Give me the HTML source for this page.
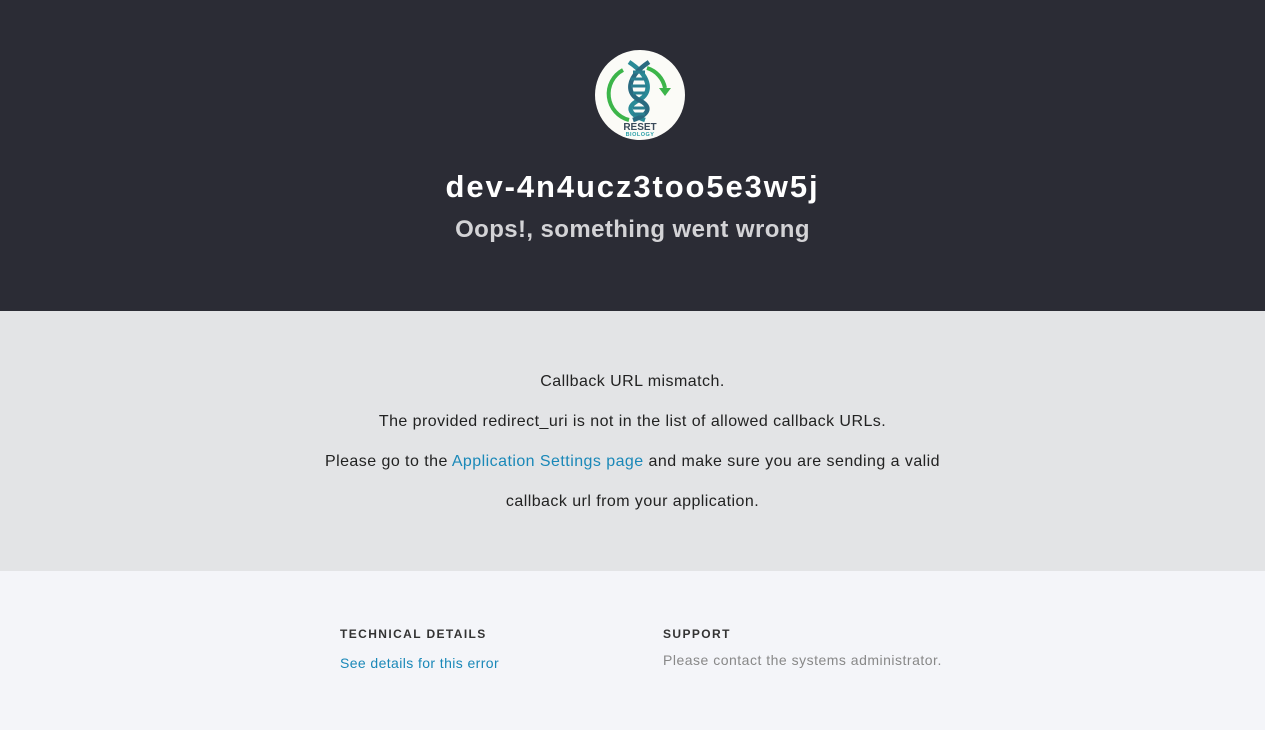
<!DOCTYPE html>
<html><head><meta charset="utf-8"><style>
*{margin:0;padding:0;box-sizing:border-box}
body{width:1265px;height:730px;font-family:"Liberation Sans",sans-serif;overflow:hidden;background:#f4f5f9}
.top{height:311px;background:#2b2c35;position:relative;text-align:center}
.logo{position:absolute;left:595px;top:50px;width:90px;height:90px;border-radius:50%;background:#fbfbf7}
h1{position:absolute;top:169px;width:100%;color:#fff;font-size:31px;font-weight:bold;letter-spacing:1.9px}
h2{position:absolute;top:216px;width:100%;color:#d3d3d6;font-size:24px;font-weight:bold;letter-spacing:0.4px}
.mid{height:260px;background:#e3e4e6;text-align:center;color:#222;font-size:16px;padding-top:52px;letter-spacing:0.45px}
.mid p{height:40px;line-height:38px}
a{color:#1a88b8;text-decoration:none}
.bot{position:relative;height:159px}
.c{position:absolute;top:56px}
.c h3{font-size:12px;letter-spacing:1.4px;color:#333;font-weight:bold;margin-bottom:14px}
.c div{font-size:14px;color:#888;letter-spacing:0.5px}
</style></head><body>
<div class="top">
<div class="logo"><svg width="90" height="90" viewBox="0 0 90 90">
<path d="M28 20 A27 27 0 0 0 34 70" fill="none" stroke="#3cb54a" stroke-width="4"/>
<path d="M52 18 A26 26 0 0 1 70 38" fill="none" stroke="#3cb54a" stroke-width="4"/>
<path d="M64 38 L76 38 L70 46 Z" fill="#3cb54a"/>
<path d="M34 12 C58 28 56 44 44 50 C32 56 32 64 50 70" fill="none" stroke="#2a8a96" stroke-width="4.5"/>
<path d="M54 12 C30 28 32 44 44 50 C56 56 56 64 38 70" fill="none" stroke="#2a6a80" stroke-width="4.5"/>
<g stroke="#2a7f90" stroke-width="3"><line x1="38" y1="22" x2="50" y2="22"/><line x1="36" y1="29" x2="52" y2="29"/><line x1="36" y1="36" x2="52" y2="36"/><line x1="38" y1="43" x2="50" y2="43"/><line x1="38" y1="58" x2="50" y2="58"/><line x1="38" y1="64" x2="50" y2="64"/></g>
<text x="45" y="80" text-anchor="middle" font-family="Liberation Sans" font-weight="bold" font-size="10" fill="#3a4a5a">RESET</text>
<text x="45" y="86" text-anchor="middle" font-family="Liberation Sans" font-weight="bold" font-size="5.5" fill="#2aa0a8" letter-spacing="0.5">BIOLOGY</text>
</svg></div>
<h1>dev-4n4ucz3too5e3w5j</h1>
<h2>Oops!, something went wrong</h2>
</div>
<div class="mid">
<p>Callback URL mismatch.</p>
<p>The provided redirect_uri is not in the list of allowed callback URLs.</p>
<p>Please go to the <a>Application Settings page</a> and make sure you are sending a valid</p>
<p>callback url from your application.</p>
</div>
<div class="bot">
<div class="c" style="left:340px"><h3>TECHNICAL DETAILS</h3><div style="letter-spacing:0.4px"><a style="font-size:14px">See details for this error</a></div></div>
<div class="c" style="left:663px"><h3>SUPPORT</h3><div style="margin-top:-3px">Please contact the systems administrator.</div></div>
</div>
</body></html>
